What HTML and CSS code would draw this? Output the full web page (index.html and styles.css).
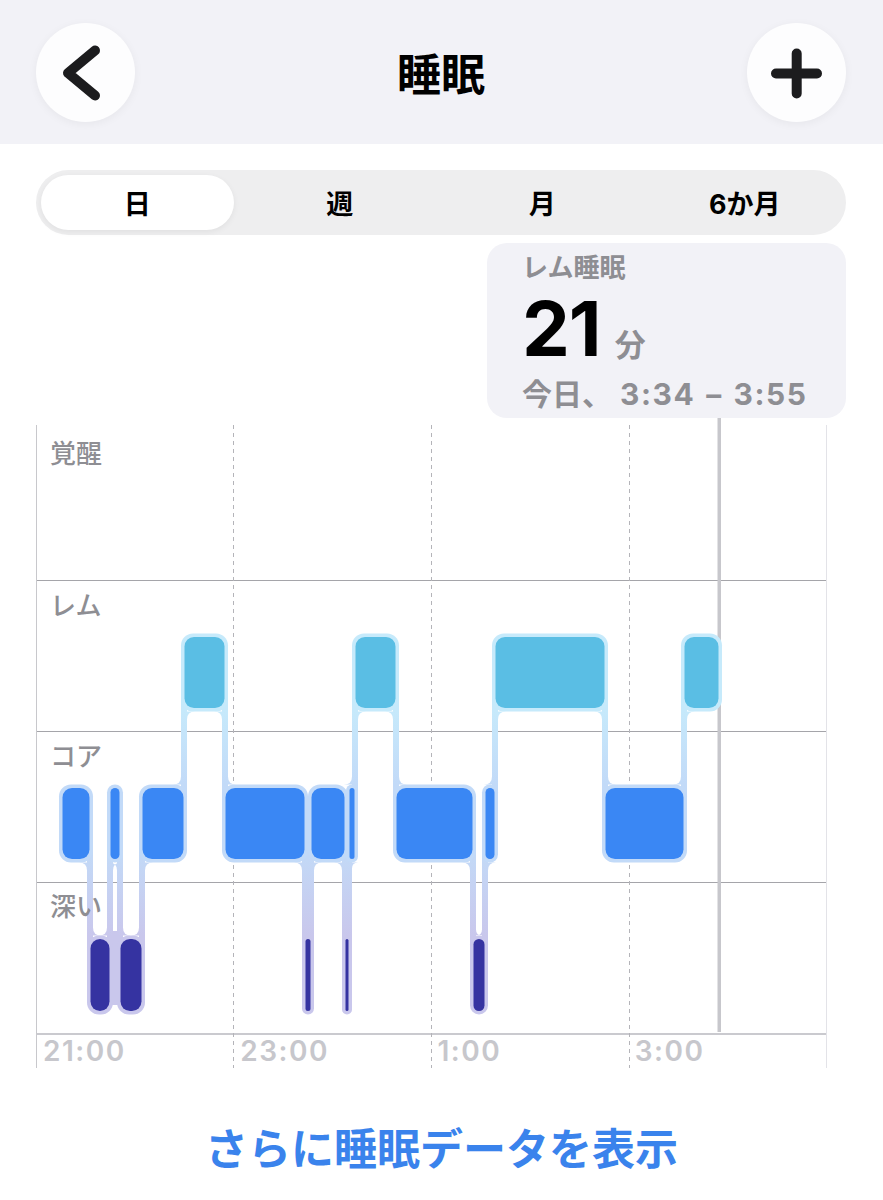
FILE: index.html
```html
<!DOCTYPE html>
<html lang="ja">
<head>
<meta charset="utf-8">
<title>睡眠</title>
<link rel="stylesheet" href="styles.css">
</head>
<body>
<header class="nav">
  <button class="circle-btn" aria-label="戻る">
    <svg class="btn-icon" viewBox="0 0 99 99" width="99" height="99"><polyline points="59,27.5 32,50 59,72.5" fill="none" stroke="#1c1c1e" stroke-width="10" stroke-linecap="round" stroke-linejoin="round"/></svg>
  </button>
  <h1 class="title">睡眠</h1>
  <button class="circle-btn" aria-label="追加">
    <svg class="btn-icon" viewBox="0 0 99 99" width="99" height="99"><path d="M49.7 30.5V70.5M29 50.5H70" fill="none" stroke="#1c1c1e" stroke-width="10" stroke-linecap="round"/></svg>
  </button>
</header>

<div class="segmented">
  <div class="seg seg-active">日</div>
  <div class="seg">週</div>
  <div class="seg">月</div>
  <div class="seg">6か月</div>
</div>

<div class="summary">
  <div class="sum-label">レム睡眠</div>
  <div class="sum-value"><span class="sum-num">21</span><span class="sum-unit">分</span></div>
  <div class="sum-range">今日、<span class="sum-times">3:34 – 3:55</span></div>
</div>

<div class="chart">
  <svg class="chart-art" viewBox="0 418 883 650" width="883" height="650">
    <defs>
      <linearGradient id="link" gradientUnits="userSpaceOnUse" x1="0" y1="672" x2="0" y2="975">
        <stop offset="0" stop-color="#c6e9fb"/>
        <stop offset="0.13" stop-color="#c6e9fb"/>
        <stop offset="0.37" stop-color="#c2daf8"/>
        <stop offset="0.62" stop-color="#c3d8f6"/>
        <stop offset="0.87" stop-color="#c9c7ec"/>
        <stop offset="1" stop-color="#c9c7ec"/>
      </linearGradient>
    </defs>
    <g stroke="#b4b4b9" stroke-width="1" stroke-dasharray="4 4">
      <line x1="233.5" y1="425" x2="233.5" y2="1068"/>
      <line x1="431.5" y1="425" x2="431.5" y2="1068"/>
      <line x1="629.5" y1="425" x2="629.5" y2="1068"/>
    </g>
    <rect x="717.5" y="418" width="3.5" height="614" fill="#c7c7cc"/>

    <g fill="url(#link)">
      <rect x="87" y="823" width="6" height="152"/>
      <rect x="107" y="823" width="6" height="152"/>
      <rect x="117" y="823" width="6" height="152"/>
      <rect x="139" y="823" width="6" height="152"/>
      <rect x="302" y="823" width="6" height="152"/>
      <rect x="308" y="823" width="6" height="152"/>
      <rect x="342" y="823" width="6" height="152"/>
      <rect x="346" y="823" width="6" height="152"/>
      <rect x="470" y="823" width="6" height="152"/>
      <rect x="482" y="823" width="6" height="152"/>
      <rect x="181" y="672" width="6" height="151"/>
      <rect x="222" y="672" width="6" height="151"/>
      <rect x="352" y="672" width="6" height="151"/>
      <rect x="393" y="672" width="6" height="151"/>
      <rect x="492" y="672" width="6" height="151"/>
      <rect x="602" y="672" width="6" height="151"/>
      <rect x="681" y="672" width="6" height="151"/>
      <path d="M87 862.5H79Q87 862.5 87 870.5Z M93 935.5H101Q93 935.5 93 927.5Z M113 862.5H121Q113 862.5 113 870.5Z M107 935.5H99Q107 935.5 107 927.5Z M117 862.5H109Q117 862.5 117 870.5Z M123 935.5H131Q123 935.5 123 927.5Z M145 862.5H153Q145 862.5 145 870.5Z M139 935.5H131Q139 935.5 139 927.5Z M187 711.5H195Q187 711.5 187 719.5Z M181 784.5H173Q181 784.5 181 776.5Z M222 711.5H214Q222 711.5 222 719.5Z M228 784.5H236Q228 784.5 228 776.5Z M302 862.5H294Q302 862.5 302 870.5Z M314 862.5H322Q314 862.5 314 870.5Z M342 862.5H334Q342 862.5 342 870.5Z M352 862.5H358Q352 862.5 352 868.5Z M358 711.5H366Q358 711.5 358 719.5Z M352 784.5H344Q352 784.5 352 776.5Z M393 711.5H385Q393 711.5 393 719.5Z M399 784.5H407Q399 784.5 399 776.5Z M470 862.5H462Q470 862.5 470 870.5Z M476 935.5H482Q476 935.5 476 929.5Z M488 862.5H496Q488 862.5 488 870.5Z M482 935.5H476Q482 935.5 482 929.5Z M498 711.5H506Q498 711.5 498 719.5Z M492 784.5H484Q492 784.5 492 776.5Z M602 711.5H594Q602 711.5 602 719.5Z M608 784.5H616Q608 784.5 608 776.5Z M687 711.5H695Q687 711.5 687 719.5Z M681 784.5H673Q681 784.5 681 776.5Z"/>
    </g>
    <rect x="112" y="931" width="6" height="74" fill="#c9c7ec"/>

    <g fill="#c6eafb">
      <rect x="181" y="633.5" width="47" height="78" rx="12"/>
      <rect x="352" y="633.5" width="47" height="78" rx="12"/>
      <rect x="492" y="633.5" width="116" height="78" rx="12"/>
      <rect x="681" y="633.5" width="41" height="78" rx="12"/>
    </g>
    <g fill="#c2daf8">
      <rect x="59" y="784.5" width="34" height="78" rx="12"/>
      <rect x="107" y="784.5" width="16" height="78" rx="8"/>
      <rect x="139" y="784.5" width="48" height="78" rx="12"/>
      <rect x="222" y="784.5" width="86" height="78" rx="12"/>
      <rect x="308" y="784.5" width="40" height="78" rx="12"/>
      <rect x="346" y="784.5" width="12" height="78" rx="6"/>
      <rect x="393" y="784.5" width="83" height="78" rx="12"/>
      <rect x="482" y="784.5" width="16" height="78" rx="8"/>
      <rect x="602" y="784.5" width="85" height="78" rx="12"/>
    </g>
    <g fill="#c9c7ec">
      <rect x="87" y="935.5" width="26" height="79" rx="12"/>
      <rect x="117" y="935.5" width="28" height="79" rx="12"/>
      <rect x="302" y="935.5" width="12" height="79" rx="6"/>
      <rect x="342" y="935.5" width="10" height="79" rx="5"/>
      <rect x="470" y="935.5" width="18" height="79" rx="9"/>
    </g>

    <g fill="#5abee4">
      <rect x="184.5" y="637" width="40" height="71" rx="9.5"/>
      <rect x="355.5" y="637" width="40" height="71" rx="9.5"/>
      <rect x="495.5" y="637" width="109" height="71" rx="9.5"/>
      <rect x="684.5" y="637" width="34" height="71" rx="9.5"/>
    </g>
    <g fill="#3a87f4">
      <rect x="62.5" y="788" width="27" height="71" rx="9.5"/>
      <rect x="110.5" y="788" width="9" height="71" rx="4.5"/>
      <rect x="142.5" y="788" width="41" height="71" rx="9.5"/>
      <rect x="225.5" y="788" width="79" height="71" rx="9.5"/>
      <rect x="311.5" y="788" width="33" height="71" rx="9.5"/>
      <rect x="349.5" y="788" width="5" height="71" rx="2.5"/>
      <rect x="396.5" y="788" width="76" height="71" rx="9.5"/>
      <rect x="485.5" y="788" width="9" height="71" rx="4.5"/>
      <rect x="605.5" y="788" width="78" height="71" rx="9.5"/>
    </g>
    <g fill="#3533a1">
      <rect x="90.5" y="939" width="19" height="72" rx="9.5"/>
      <rect x="120.5" y="939" width="21" height="72" rx="9.5"/>
      <rect x="305.5" y="939" width="5" height="72" rx="2.5"/>
      <rect x="345.5" y="939" width="3" height="72" rx="1.5"/>
      <rect x="473.5" y="939" width="11" height="72" rx="5.5"/>
    </g>
  </svg>

  <div class="row row-first"><span class="row-label">覚醒</span></div>
  <div class="row"><span class="row-label">レム</span></div>
  <div class="row"><span class="row-label">コア</span></div>
  <div class="row row-last"><span class="row-label">深い</span></div>
  <div class="axis">
    <span class="tick">21:00</span>
    <span class="tick">23:00</span>
    <span class="tick">1:00</span>
    <span class="tick">3:00</span>
  </div>
</div>

<a class="more" href="#">さらに睡眠データを表示</a>
</body>
</html>
```

FILE: styles.css
```css
html, body {
  margin: 0;
  padding: 0;
  background: #ffffff;
}

body {
  width: 883px;
  font-family: Inter, "Noto Sans CJK JP", sans-serif;
  color: #000;
}

/* Navigation bar */
.nav {
  height: 144px;
  background: #f2f2f7;
  display: flex;
  align-items: center;
  justify-content: space-between;
  padding: 0 37px 0 36px;
  box-sizing: border-box;
}

.circle-btn {
  width: 99px;
  height: 99px;
  border-radius: 50%;
  border: none;
  padding: 0;
  background: #fdfdfe;
  box-shadow: 0 2px 10px rgba(0, 0, 0, 0.05);
  display: flex;
}

.btn-icon {
  display: block;
}

.title {
  margin: 0;
  font-family: "Noto Sans CJK JP", sans-serif;
  font-size: 44px;
  font-weight: 700;
  line-height: 1;
  color: #000;
}

/* Segmented control */
.segmented {
  margin: 26px 37px 0 36px;
  height: 65px;
  border-radius: 33px;
  background: #eeeeef;
  display: grid;
  grid-template-columns: repeat(4, 1fr);
}

.seg {
  display: flex;
  align-items: center;
  justify-content: center;
  font-family: Inter, "Noto Sans CJK JP", sans-serif;
  font-size: 27px;
  font-weight: 700;
  color: #000;
}

.seg-active {
  margin: 5px;
  background: #ffffff;
  border-radius: 28px;
  box-shadow: 0 2px 6px rgba(0, 0, 0, 0.06);
}

/* Summary card */
.summary {
  margin: 8px 0 0 487px;
  width: 359px;
  height: 175px;
  box-sizing: border-box;
  background: #f2f2f7;
  border-radius: 20px;
  padding: 6px 0 0 35px;
}

.sum-label {
  font-family: "Noto Sans CJK JP", sans-serif;
  font-size: 26px;
  font-weight: 700;
  line-height: 34px;
  color: #8e8e93;
}

.sum-value {
  margin-top: 7px;
  height: 76px;
  display: flex;
  align-items: baseline;
}

.sum-num {
  font-family: Inter, sans-serif;
  font-size: 76px;
  font-weight: 700;
  line-height: 76px;
  letter-spacing: -1px;
  color: #000;
}

.sum-unit {
  margin-left: 14px;
  font-family: "Noto Sans CJK JP", sans-serif;
  font-size: 31px;
  font-weight: 700;
  line-height: 30px;
  color: #8e8e93;
}

.sum-range {
  margin-top: 8px;
  font-family: Inter, "Noto Sans CJK JP", sans-serif;
  font-size: 30px;
  font-weight: 700;
  line-height: 40px;
  color: #8e8e93;
  white-space: nowrap;
}

.sum-times {
  margin-left: 8px;
  letter-spacing: 1.6px;
  word-spacing: 2px;
}

/* Chart */
.chart {
  position: relative;
  margin: 7px 0 0 36px;
  width: 791px;
  box-sizing: border-box;
  border-left: 1px solid #c8c8cc;
  border-right: 1px solid #e3e3e8;
}

.chart-art {
  position: absolute;
  left: -37px;
  top: -7px;
  display: block;
}

.row {
  height: 151px;
  box-sizing: border-box;
  border-bottom: 1px solid #a5a5aa;
  padding: 8px 0 0 13px;
}

.row-first {
  height: 156px;
  padding-top: 12px;
}

.row-last {
  height: 152px;
  padding-top: 7px;
  border-bottom: 2px solid #cacacf;
}

.row-label {
  position: relative;
  display: inline-block;
  font-family: "Noto Sans CJK JP", sans-serif;
  font-size: 26px;
  font-weight: 500;
  line-height: 30px;
  color: #8e8e93;
}

.axis {
  height: 33px;
  display: grid;
  grid-template-columns: repeat(4, 1fr);
}

.tick {
  padding-left: 6px;
  font-family: Inter, sans-serif;
  font-size: 28px;
  font-weight: 600;
  line-height: 33px;
  color: #c7c7cc;
  letter-spacing: 1.5px;
}

/* Bottom link */
.more {
  display: block;
  margin-top: 48px;
  text-align: center;
  font-family: "Noto Sans CJK JP", sans-serif;
  font-size: 43px;
  font-weight: 600;
  line-height: 60px;
  color: #3a83ec;
  text-decoration: none;
}
```
